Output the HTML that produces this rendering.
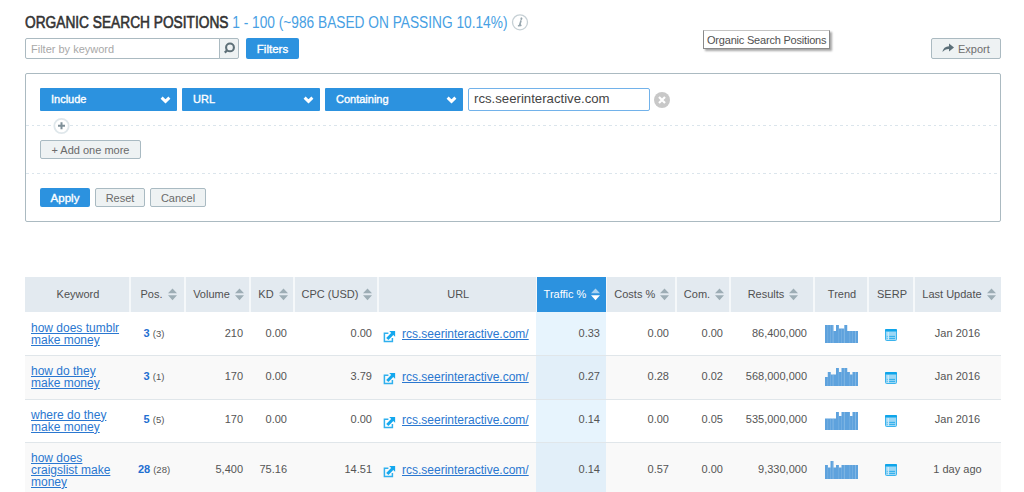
<!DOCTYPE html>
<html><head><meta charset="utf-8">
<style>
*{box-sizing:border-box;margin:0;padding:0}
html,body{width:1024px;height:492px;overflow:hidden;background:#fff;font-family:"Liberation Sans",sans-serif;color:#333}
.abs{position:absolute}
.title{left:25px;top:14px;font-size:16px;white-space:nowrap;line-height:18px;transform:scaleX(0.857);transform-origin:0 0}
.title b{color:#333;font-weight:normal;-webkit-text-stroke:0.6px #333}
.title span{color:#47a0e3}
.info{left:512px;top:14px;width:17px;height:17px;border:1.5px solid #9fb1bd;border-radius:50%;font:italic bold 10px "Liberation Serif",serif;color:#8a9ca8;text-align:center;line-height:14px}
.fin{left:25px;top:38px;width:195px;height:21px;border:1px solid #abbac1;border-radius:2px 0 0 2px;font-size:11px;color:#a8a8a8;padding:4px 0 0 5px}
.fsb{left:219px;top:38px;width:20px;height:21px;border:1px solid #abbac1;background:#eef2f3;border-radius:0 2px 2px 0}
.filters{left:246px;top:38px;width:53px;height:21px;background:#2c92df;border-radius:2px;color:#fff;font-size:11.5px;font-weight:normal;-webkit-text-stroke:0.35px #fff;text-align:center;line-height:23px}
.tip{left:703px;top:30px;width:127px;height:19px;border:1px solid #8a8a8a;border-top-color:#c4c4c4;background:#fff;box-shadow:2px 2px 2px rgba(0,0,0,.35);font-size:11px;color:#505050;line-height:19px;padding-left:3px;letter-spacing:-0.2px;white-space:nowrap}
.export{left:931px;top:38px;width:70px;height:21px;border:1px solid #abbac1;background:#eef2f3;border-radius:2px;font-size:11px;color:#6e6e6e;line-height:21px;padding-left:26px}
.panel{left:25px;top:73px;width:976px;height:149px;border:1px solid #abbac1;border-radius:2px}
.dd{top:88px;height:23px;font-size:11px !important;background:#2c92df;border-radius:1px;color:#fff;font-weight:normal;-webkit-text-stroke:0.35px #fff;line-height:23px;padding-left:11px}
.dd svg{position:absolute;right:6px;top:7.5px}
.tin{left:467.5px;top:87.5px;width:182px;height:23.5px;border:1.5px solid #72b2ea;border-radius:2px;font-size:13.2px;color:#444;line-height:20.5px;padding-left:5.5px}
.clr{left:654px;top:92px;width:16px;height:16px;border-radius:50%;background:#c8c8c8}
.dash{left:26px;width:974px;height:1px;background:repeating-linear-gradient(90deg,#dbe5ec 0 3px,transparent 3px 6px,#dbe5ec 6px 8.5px,transparent 8.5px 11px)}
.plus{left:53px;top:117px;width:17px;height:17px;border-radius:50%;border:1px solid #d6e0e5;background:#fff;color:#7d8a91;font-size:14px;line-height:14px;text-align:center}
.btn{height:19px;border:1px solid #a9bac2;background:#eef2f3;border-radius:2px;font-size:11px;color:#6a6a6a;line-height:18px;text-align:center}
.apply{left:40px;top:188px;width:50px;height:19px;background:#2c92df;border-radius:2px;color:#fff;font-size:11.5px;font-weight:normal;-webkit-text-stroke:0.35px #fff;line-height:20.5px;text-align:center}
table{position:absolute;left:25px;top:277px;border-collapse:collapse;table-layout:fixed;width:976px;font-size:11px;color:#555}
th{background:#e3eaf0;height:35px;font-weight:normal;color:#505050;border-left:2px solid #f5f8fa;white-space:nowrap;font-size:11px;padding:0}
th:first-child{border-left:0}
th.act{background:#2c92df;color:#fff;border-left-width:1px}
th.act+th{border-left-width:1px}
th{padding-left:2px;padding-bottom:2px}
.hs{position:relative;padding-right:14px}
.hs .arr{position:absolute;right:0;top:0.5px}
td{border-top:1px solid #e0e6ea;padding:0 6px 2px;white-space:nowrap;vertical-align:middle}
td.kw,td.url,td.ic{padding-bottom:0 !important}
tr.r1 td{padding-top:2px;border-top:0}
tr.r3 td{padding-bottom:3px}
tr.r3 td.kw,td.url,td.ic{padding-bottom:0 !important}
tr.g td{background:#f9f9f9}
td.act{background:#e7f4fd;padding-right:6px !important}
td.cpc{padding-right:6px !important}
tr.g td.act{background:#e2eff9}
.kw a{color:#2a77d0;text-decoration:underline;white-space:normal;display:block;font-size:12px;line-height:12px}
.pos{text-align:center;padding-right:7px;padding-left:0}
.pos b{color:#1f6fd1;font-size:11px}
.pos small{font-size:9.5px;color:#555;margin-left:0}
.r{text-align:right;padding-right:7px}
.c{text-align:center}
.kd{text-align:right;padding-right:7px}
.url{padding-left:5px}
.url a{color:#2a77d0;text-decoration:underline;font-size:12px;margin-left:6px}
.ext{vertical-align:-3.5px;position:relative;top:1px}
.trend,.serp{vertical-align:middle;display:inline-block}
</style></head><body>
<div class="abs title"><b>ORGANIC SEARCH POSITIONS</b> <span>1 - 100 (~986 BASED ON PASSING 10.14%)</span></div>
<svg class="abs" style="left:511px;top:14px" width="18" height="17" viewBox="0 0 18 17"><circle cx="9" cy="8.3" r="7.5" fill="none" stroke="#c6d0d5" stroke-width="1.3"/><path d="M10.5 4.3 L10.3 5.1" stroke="#97a6ae" stroke-width="1.9" stroke-linecap="round"/><path d="M9.9 6.9 L8.4 11.8 M7.6 11.8 L9.8 11.4" stroke="#97a6ae" stroke-width="1.6" stroke-linecap="round"/></svg>
<div class="abs fin">Filter by keyword</div>
<div class="abs fsb"><svg width="19" height="19" viewBox="0 0 19 19"><circle cx="10" cy="8.4" r="3.9" fill="none" stroke="#5d6f77" stroke-width="2.1"/><line x1="7.4" y1="11" x2="4.8" y2="13.6" stroke="#5d6f77" stroke-width="2.2"/></svg></div>
<div class="abs filters">Filters</div>
<div class="abs tip">Organic Search Positions</div>
<div class="abs export"><svg class="abs" style="left:10px;top:4px" width="13" height="10" viewBox="0 0 13 10"><path d="M0.5 9 C1 5.5 3.5 3.3 7 3.2 V0.5 L12 4.6 L7 8.6 V6 C4 6 2.2 7 0.5 9Z" fill="#5b6f78"/></svg>Export</div>
<div class="abs panel"></div>
<div class="abs dd" style="left:40px;width:137px">Include<svg width="11" height="8" viewBox="0 0 11 8"><path d="M1.6 1.6 L5.5 5.4 L9.4 1.6" fill="none" stroke="#fff" stroke-width="2.9"/></svg></div>
<div class="abs dd" style="left:182px;width:138px">URL<svg width="11" height="8" viewBox="0 0 11 8"><path d="M1.6 1.6 L5.5 5.4 L9.4 1.6" fill="none" stroke="#fff" stroke-width="2.9"/></svg></div>
<div class="abs dd" style="left:325px;width:138px">Containing<svg width="11" height="8" viewBox="0 0 11 8"><path d="M1.6 1.6 L5.5 5.4 L9.4 1.6" fill="none" stroke="#fff" stroke-width="2.9"/></svg></div>
<div class="abs tin">rcs.seerinteractive.com</div>
<div class="abs clr"><svg width="16" height="16" viewBox="0 0 16 16"><path d="M5 5 L11 11 M11 5 L5 11" stroke="#fff" stroke-width="2.2"/></svg></div>
<div class="abs dash" style="top:125px"></div>
<svg class="abs" style="left:53px;top:117px" width="18" height="18" viewBox="0 0 18 18"><circle cx="8.5" cy="9" r="7.2" fill="#fff" stroke="#dfe7eb" stroke-width="1.8"/><path d="M8.5 5.3 V12.3 M5 8.8 H12" stroke="#7f9099" stroke-width="2"/></svg>
<div class="abs btn" style="left:40px;top:140px;width:101px">+ Add one more</div>
<div class="abs dash" style="top:173px"></div>
<div class="abs apply">Apply</div>
<div class="abs btn" style="left:95px;top:188px;width:50px">Reset</div>
<div class="abs btn" style="left:150px;top:188px;width:56px">Cancel</div>

<table>
<colgroup><col style="width:105px"><col style="width:55px"><col style="width:65px"><col style="width:44px"><col style="width:84px"><col style="width:158px"><col style="width:70px"><col style="width:70px"><col style="width:54px"><col style="width:84px"><col style="width:54px"><col style="width:46px"><col style="width:87px"></colgroup>
<tr class="hd">
<th>Keyword</th><th><span class="hs">Pos.<svg class="arr" width="9" height="13" viewBox="0 0 9 13"><path d="M0 5.2 L4.5 0.4 L9 5.2Z M0 7.2 L4.5 12.2 L9 7.2Z" fill="#9dadb5"/></svg></span></th><th><span class="hs">Volume<svg class="arr" width="9" height="13" viewBox="0 0 9 13"><path d="M0 5.2 L4.5 0.4 L9 5.2Z M0 7.2 L4.5 12.2 L9 7.2Z" fill="#9dadb5"/></svg></span></th><th><span class="hs">KD<svg class="arr" width="9" height="13" viewBox="0 0 9 13"><path d="M0 5.2 L4.5 0.4 L9 5.2Z M0 7.2 L4.5 12.2 L9 7.2Z" fill="#9dadb5"/></svg></span></th><th><span class="hs">CPC (USD)<svg class="arr" width="9" height="13" viewBox="0 0 9 13"><path d="M0 5.2 L4.5 0.4 L9 5.2Z M0 7.2 L4.5 12.2 L9 7.2Z" fill="#9dadb5"/></svg></span></th><th>URL</th><th class="act"><span class="hs">Traffic %<svg class="arr" width="9" height="13" viewBox="0 0 9 13"><path d="M0 5.2 L4.5 0.4 L9 5.2Z" fill="#a9d3f2"/><path d="M0 7.2 L4.5 12.2 L9 7.2Z" fill="#fff"/></svg></span></th><th><span class="hs">Costs %<svg class="arr" width="9" height="13" viewBox="0 0 9 13"><path d="M0 5.2 L4.5 0.4 L9 5.2Z M0 7.2 L4.5 12.2 L9 7.2Z" fill="#9dadb5"/></svg></span></th><th><span class="hs">Com.<svg class="arr" width="9" height="13" viewBox="0 0 9 13"><path d="M0 5.2 L4.5 0.4 L9 5.2Z M0 7.2 L4.5 12.2 L9 7.2Z" fill="#9dadb5"/></svg></span></th><th><span class="hs">Results<svg class="arr" width="9" height="13" viewBox="0 0 9 13"><path d="M0 5.2 L4.5 0.4 L9 5.2Z M0 7.2 L4.5 12.2 L9 7.2Z" fill="#9dadb5"/></svg></span></th><th>Trend</th><th>SERP</th><th><span class="hs">Last Update<svg class="arr" width="9" height="13" viewBox="0 0 9 13"><path d="M0 5.2 L4.5 0.4 L9 5.2Z M0 7.2 L4.5 12.2 L9 7.2Z" fill="#9dadb5"/></svg></span></th>
</tr>
<tr class="r1" style="height:43px"><td class="kw"><a>how does tumblr make money</a></td><td class="pos"><b>3</b> <small>(3)</small></td><td class="r">210</td><td class="kd">0.00</td><td class="r cpc">0.00</td><td class="url"><svg class="ext" width="13" height="13" viewBox="0 0 13 13"><path d="M5.4 3.2 H1.4 V11.6 H9.4 V8" fill="none" stroke="#2fb0ee" stroke-width="1.5"/><path d="M6.2 0.9 H12.1 V6.8Z" fill="#14a8ee"/><path d="M4.3 9 L10.2 3" stroke="#14a8ee" stroke-width="3.1"/></svg><a>rcs.seerinteractive.com/</a></td><td class="r act">0.33</td><td class="r">0.00</td><td class="r">0.00</td><td class="r">86,400,000</td><td class="c ic"><svg class="trend" width="33" height="18" viewBox="0 0 33 18"><g fill="#5ea2dd"><rect x="0.00" y="0.0" width="3" height="18.0"/><rect x="2.75" y="0.0" width="3" height="18.0"/><rect x="5.50" y="0.0" width="3" height="18.0"/><rect x="8.25" y="6.0" width="3" height="12.0"/><rect x="11.00" y="0.0" width="3" height="18.0"/><rect x="13.75" y="3.5" width="3" height="14.5"/><rect x="16.50" y="3.5" width="3" height="14.5"/><rect x="19.25" y="0.0" width="3" height="18.0"/><rect x="22.00" y="6.0" width="3" height="12.0"/><rect x="24.75" y="6.0" width="3" height="12.0"/><rect x="27.50" y="6.0" width="3" height="12.0"/><rect x="30.25" y="6.0" width="3" height="12.0"/></g><path d="M2.7 0V18M7.7 0V18M13.7 0V18M19.2 0V18M24.8 0V18M30.5 0V18" stroke="#fff" stroke-opacity="0.22" stroke-width="0.6"/></svg></td><td class="c ic"><svg class="serp" width="12" height="12" viewBox="0 0 12 12"><rect x="0.5" y="0.5" width="11" height="11" rx="1" fill="#9cd7f5" stroke="#3ab3ed"/><rect x="0" y="0" width="12" height="2.4" rx="1" fill="#0fa5ea"/><path d="M3.2 3 V11" stroke="#eef9fe" stroke-width="0.8"/><path d="M4.2 7.4 H10 M4.2 9.4 H10 M1.8 7.4 H2.6 M1.8 9.4 H2.6" stroke="#1ea9eb" stroke-width="0.9"/></svg></td><td class="c">Jan 2016</td></tr>
<tr class="g" style="height:44px"><td class="kw"><a>how do they make money</a></td><td class="pos"><b>3</b> <small>(1)</small></td><td class="r">170</td><td class="kd">0.00</td><td class="r cpc">3.79</td><td class="url"><svg class="ext" width="13" height="13" viewBox="0 0 13 13"><path d="M5.4 3.2 H1.4 V11.6 H9.4 V8" fill="none" stroke="#2fb0ee" stroke-width="1.5"/><path d="M6.2 0.9 H12.1 V6.8Z" fill="#14a8ee"/><path d="M4.3 9 L10.2 3" stroke="#14a8ee" stroke-width="3.1"/></svg><a>rcs.seerinteractive.com/</a></td><td class="r act">0.27</td><td class="r">0.28</td><td class="r">0.02</td><td class="r">568,000,000</td><td class="c ic"><svg class="trend" width="33" height="18" viewBox="0 0 33 18"><g fill="#5ea2dd"><rect x="0.00" y="9.0" width="3" height="9.0"/><rect x="2.75" y="4.0" width="3" height="14.0"/><rect x="5.50" y="6.5" width="3" height="11.5"/><rect x="8.25" y="6.5" width="3" height="11.5"/><rect x="11.00" y="0.0" width="3" height="18.0"/><rect x="13.75" y="4.0" width="3" height="14.0"/><rect x="16.50" y="0.0" width="3" height="18.0"/><rect x="19.25" y="0.0" width="3" height="18.0"/><rect x="22.00" y="4.0" width="3" height="14.0"/><rect x="24.75" y="6.5" width="3" height="11.5"/><rect x="27.50" y="4.0" width="3" height="14.0"/><rect x="30.25" y="4.0" width="3" height="14.0"/></g><path d="M2.7 0V18M7.7 0V18M13.7 0V18M19.2 0V18M24.8 0V18M30.5 0V18" stroke="#fff" stroke-opacity="0.22" stroke-width="0.6"/></svg></td><td class="c ic"><svg class="serp" width="12" height="12" viewBox="0 0 12 12"><rect x="0.5" y="0.5" width="11" height="11" rx="1" fill="#9cd7f5" stroke="#3ab3ed"/><rect x="0" y="0" width="12" height="2.4" rx="1" fill="#0fa5ea"/><path d="M3.2 3 V11" stroke="#eef9fe" stroke-width="0.8"/><path d="M4.2 7.4 H10 M4.2 9.4 H10 M1.8 7.4 H2.6 M1.8 9.4 H2.6" stroke="#1ea9eb" stroke-width="0.9"/></svg></td><td class="c">Jan 2016</td></tr>
<tr class="r3" style="height:43px"><td class="kw"><a>where do they make money</a></td><td class="pos"><b>5</b> <small>(5)</small></td><td class="r">170</td><td class="kd">0.00</td><td class="r cpc">0.00</td><td class="url"><svg class="ext" width="13" height="13" viewBox="0 0 13 13"><path d="M5.4 3.2 H1.4 V11.6 H9.4 V8" fill="none" stroke="#2fb0ee" stroke-width="1.5"/><path d="M6.2 0.9 H12.1 V6.8Z" fill="#14a8ee"/><path d="M4.3 9 L10.2 3" stroke="#14a8ee" stroke-width="3.1"/></svg><a>rcs.seerinteractive.com/</a></td><td class="r act">0.14</td><td class="r">0.00</td><td class="r">0.05</td><td class="r">535,000,000</td><td class="c ic"><svg class="trend" width="33" height="18" viewBox="0 0 33 18"><g fill="#5ea2dd"><rect x="0.00" y="6.5" width="3" height="11.5"/><rect x="2.75" y="6.5" width="3" height="11.5"/><rect x="5.50" y="6.5" width="3" height="11.5"/><rect x="8.25" y="6.5" width="3" height="11.5"/><rect x="11.00" y="0.0" width="3" height="18.0"/><rect x="13.75" y="4.0" width="3" height="14.0"/><rect x="16.50" y="0.0" width="3" height="18.0"/><rect x="19.25" y="0.0" width="3" height="18.0"/><rect x="22.00" y="0.0" width="3" height="18.0"/><rect x="24.75" y="4.0" width="3" height="14.0"/><rect x="27.50" y="0.0" width="3" height="18.0"/><rect x="30.25" y="0.0" width="3" height="18.0"/></g><path d="M2.7 0V18M7.7 0V18M13.7 0V18M19.2 0V18M24.8 0V18M30.5 0V18" stroke="#fff" stroke-opacity="0.22" stroke-width="0.6"/></svg></td><td class="c ic"><svg class="serp" width="12" height="12" viewBox="0 0 12 12"><rect x="0.5" y="0.5" width="11" height="11" rx="1" fill="#9cd7f5" stroke="#3ab3ed"/><rect x="0" y="0" width="12" height="2.4" rx="1" fill="#0fa5ea"/><path d="M3.2 3 V11" stroke="#eef9fe" stroke-width="0.8"/><path d="M4.2 7.4 H10 M4.2 9.4 H10 M1.8 7.4 H2.6 M1.8 9.4 H2.6" stroke="#1ea9eb" stroke-width="0.9"/></svg></td><td class="c">Jan 2016</td></tr>
<tr class="g" style="height:55px"><td class="kw"><a>how does craigslist make money</a></td><td class="pos"><b>28</b> <small>(28)</small></td><td class="r">5,400</td><td class="kd">75.16</td><td class="r cpc">14.51</td><td class="url"><svg class="ext" width="13" height="13" viewBox="0 0 13 13"><path d="M5.4 3.2 H1.4 V11.6 H9.4 V8" fill="none" stroke="#2fb0ee" stroke-width="1.5"/><path d="M6.2 0.9 H12.1 V6.8Z" fill="#14a8ee"/><path d="M4.3 9 L10.2 3" stroke="#14a8ee" stroke-width="3.1"/></svg><a>rcs.seerinteractive.com/</a></td><td class="r act">0.14</td><td class="r">0.57</td><td class="r">0.00</td><td class="r">9,330,000</td><td class="c ic"><svg class="trend" width="33" height="18" viewBox="0 0 33 18"><g fill="#5ea2dd"><rect x="0.00" y="4.0" width="3" height="14.0"/><rect x="2.75" y="6.5" width="3" height="11.5"/><rect x="5.50" y="0.0" width="3" height="18.0"/><rect x="8.25" y="6.5" width="3" height="11.5"/><rect x="11.00" y="4.0" width="3" height="14.0"/><rect x="13.75" y="6.5" width="3" height="11.5"/><rect x="16.50" y="4.0" width="3" height="14.0"/><rect x="19.25" y="4.0" width="3" height="14.0"/><rect x="22.00" y="4.0" width="3" height="14.0"/><rect x="24.75" y="4.0" width="3" height="14.0"/><rect x="27.50" y="4.0" width="3" height="14.0"/><rect x="30.25" y="4.0" width="3" height="14.0"/></g><path d="M2.7 0V18M7.7 0V18M13.7 0V18M19.2 0V18M24.8 0V18M30.5 0V18" stroke="#fff" stroke-opacity="0.22" stroke-width="0.6"/></svg></td><td class="c ic"><svg class="serp" width="12" height="12" viewBox="0 0 12 12"><rect x="0.5" y="0.5" width="11" height="11" rx="1" fill="#9cd7f5" stroke="#3ab3ed"/><rect x="0" y="0" width="12" height="2.4" rx="1" fill="#0fa5ea"/><path d="M3.2 3 V11" stroke="#eef9fe" stroke-width="0.8"/><path d="M4.2 7.4 H10 M4.2 9.4 H10 M1.8 7.4 H2.6 M1.8 9.4 H2.6" stroke="#1ea9eb" stroke-width="0.9"/></svg></td><td class="c">1 day ago</td></tr>
</table>
</body></html>
